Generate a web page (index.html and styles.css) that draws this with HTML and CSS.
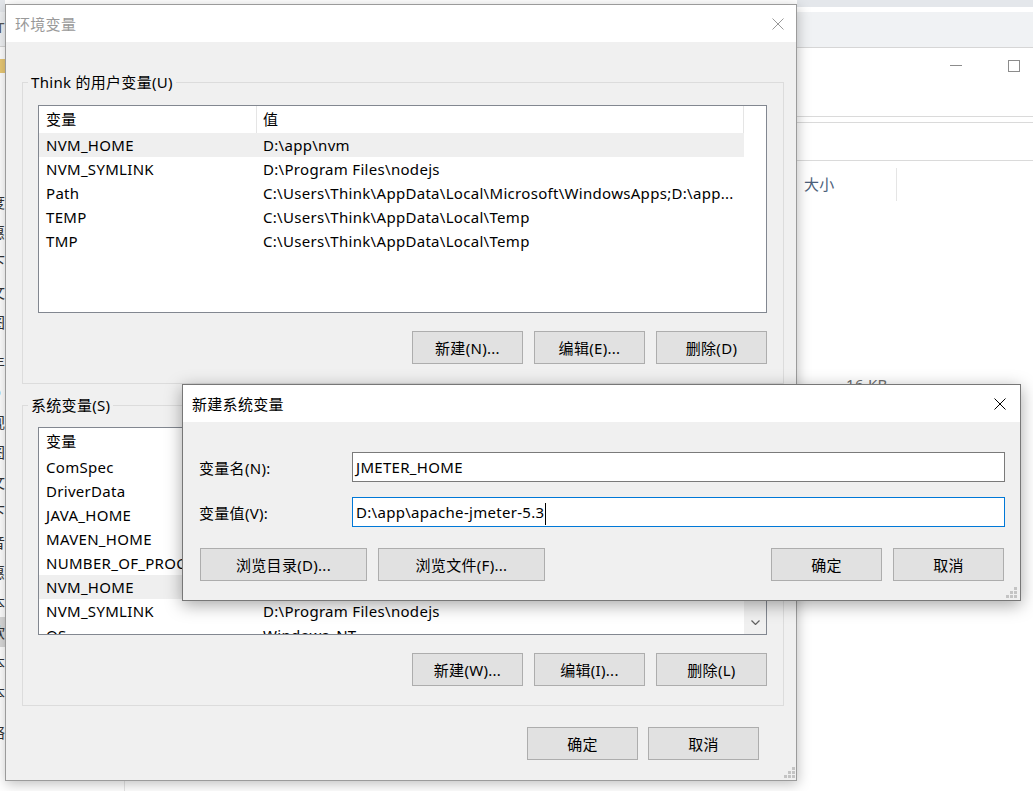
FILE: index.html
```html
<!DOCTYPE html>
<html lang="zh-CN">
<head>
    <meta charset="UTF-8">
    <title>环境变量</title>
    <link rel="stylesheet" href="styles.css">
</head>
<body>
<div class="desktop">
    <!-- explorer window behind the dialogs -->
    <div class="explorer-left">
        <div class="nav-top"></div>
        <div class="nav-title">T</div>
        <div class="nav-folder"></div>
        <ul class="nav-list">
            <li>度</li>
            <li>惠</li>
            <li>下</li>
            <li>文</li>
            <li>图</li>
            <li class="gap">丰</li>
            <li>D</li>
            <li>视</li>
            <li>图</li>
            <li>文</li>
            <li>下</li>
            <li>音</li>
            <li>惠</li>
            <li>本</li>
            <li class="current">软</li>
            <li>本</li>
            <li>本</li>
            <li class="gap">络</li>
        </ul>
    </div>

    <div class="explorer-right">
        <div class="tabs-band"></div>
        <div class="tabs-gap"></div>
        <div class="tabs-strip"></div>
        <div class="caption">
            <span class="cap-min"></span>
            <span class="cap-max"></span>
        </div>
        <div class="ribbon-line"></div>
        <div class="address-bar"></div>
        <div class="file-header">
            <span class="file-col">大小</span>
        </div>
        <div class="file-size">16 KB</div>
    </div>

    <div class="explorer-bottom"></div>

    <!-- 环境变量 -->
    <section class="dialog env-dialog">
        <header class="title-bar">
            <span class="title">环境变量</span>
            <svg class="close" viewBox="0 0 12 12"><path d="M0.5 0.5 L11.5 11.5 M11.5 0.5 L0.5 11.5"/></svg>
        </header>
        <div class="dialog-body">
            <fieldset class="group">
                <legend>Think 的用户变量(U)</legend>
                <div class="group-body">
                    <div class="list">
                        <div class="list-cols">
                            <div class="list-head"><span>变量</span><span>值</span></div>
                            <div class="row selected"><span>NVM_HOME</span><span>D:\app\nvm</span></div>
                            <div class="row"><span>NVM_SYMLINK</span><span>D:\Program Files\nodejs</span></div>
                            <div class="row"><span>Path</span><span>C:\Users\Think\AppData\Local\Microsoft\WindowsApps;D:\app...</span></div>
                            <div class="row"><span>TEMP</span><span>C:\Users\Think\AppData\Local\Temp</span></div>
                            <div class="row"><span>TMP</span><span>C:\Users\Think\AppData\Local\Temp</span></div>
                        </div>
                        <div class="gutter"></div>
                    </div>
                    <div class="btn-row">
                        <button>新建(N)...</button>
                        <button>编辑(E)...</button>
                        <button>删除(D)</button>
                    </div>
                </div>
            </fieldset>

            <fieldset class="group system">
                <legend>系统变量(S)</legend>
                <div class="group-body">
                    <div class="list">
                        <div class="list-cols">
                            <div class="list-head"><span>变量</span><span>值</span></div>
                            <div class="row"><span>ComSpec</span><span>C:\Windows\system32\cmd.exe</span></div>
                            <div class="row"><span>DriverData</span><span>C:\Windows\System32\Drivers\DriverData</span></div>
                            <div class="row"><span>JAVA_HOME</span><span>D:\app\jdk1.8.0_161</span></div>
                            <div class="row"><span>MAVEN_HOME</span><span>D:\app\apache-maven-3.6.3</span></div>
                            <div class="row"><span>NUMBER_OF_PROCESSORS</span><span>8</span></div>
                            <div class="row selected"><span>NVM_HOME</span><span>D:\app\nvm</span></div>
                            <div class="row"><span>NVM_SYMLINK</span><span>D:\Program Files\nodejs</span></div>
                            <div class="row"><span>OS</span><span>Windows_NT</span></div>
                        </div>
                        <div class="gutter scrollbar">
                            <svg class="arrow" viewBox="0 0 9 5"><path d="M0.5 0.5 L4.5 4.5 L8.5 0.5"/></svg>
                        </div>
                    </div>
                    <div class="btn-row">
                        <button>新建(W)...</button>
                        <button>编辑(I)...</button>
                        <button>删除(L)</button>
                    </div>
                </div>
            </fieldset>

            <div class="btn-row footer">
                <button>确定</button>
                <button>取消</button>
            </div>
        </div>
        <svg class="grip" viewBox="0 0 11 11"><path d="M8 0h3v3h-3z M4 4h3v3h-3z M8 4h3v3h-3z M0 8h3v3h-3z M4 8h3v3h-3z M8 8h3v3h-3z"/></svg>
    </section>

    <!-- 新建系统变量 -->
    <section class="dialog new-dialog">
        <header class="title-bar">
            <span class="title">新建系统变量</span>
            <svg class="close" viewBox="0 0 12 12"><path d="M0.5 0.5 L11.5 11.5 M11.5 0.5 L0.5 11.5"/></svg>
        </header>
        <div class="new-body">
            <div class="field">
                <label>变量名(N):</label>
                <div class="textbox">JMETER_HOME</div>
            </div>
            <div class="field">
                <label>变量值(V):</label>
                <div class="textbox focused">D:\app\apache-jmeter-5.3<span class="caret"></span></div>
            </div>
            <div class="btn-row browse-row">
                <div class="btn-group">
                    <button class="wide">浏览目录(D)...</button>
                    <button class="wide">浏览文件(F)...</button>
                </div>
                <div class="btn-group">
                    <button>确定</button>
                    <button>取消</button>
                </div>
            </div>
        </div>
        <svg class="grip" viewBox="0 0 11 11"><path d="M8 0h3v3h-3z M4 4h3v3h-3z M8 4h3v3h-3z M0 8h3v3h-3z M4 8h3v3h-3z M8 8h3v3h-3z"/></svg>
    </section>
</div>
</body>
</html>
```

FILE: styles.css
```css
* {
    margin: 0;
    padding: 0;
    box-sizing: border-box;
}

body {
    font-family: "Noto Sans", "Noto Sans CJK SC", sans-serif;
    font-size: 15px;
    letter-spacing: 0.3px;
    color: #000;
    background: #fff;
}

.desktop {
    position: relative;
    width: 1033px;
    height: 791px;
    overflow: hidden;
    background: #fff;
}

/* ---- explorer in the background ---- */

.explorer-left {
    position: absolute;
    left: 0;
    top: 0;
    width: 5px;
    height: 791px;
    overflow: hidden;
    background: #fff;
}

.nav-top {
    height: 12px;
    background: #e4e7eb;
}

.nav-title {
    height: 35px;
    margin-left: -4px;
    line-height: 30px;
    color: #555;
    border-bottom: 1px solid #d6d6d6;
    background: #f0f2f4;
}

.nav-folder {
    width: 5px;
    height: 14px;
    margin-top: 12px;
    background: #e8c874;
}

.nav-list {
    list-style: none;
    margin-top: 114px;
}

.nav-list li {
    height: 30px;
    line-height: 30px;
    margin-left: -10px;
    color: #333;
}

.nav-list li.gap {
    margin-top: 10px;
}

.nav-list li.current {
    background: #d9d9d9;
}

.explorer-right {
    position: absolute;
    left: 797px;
    top: 0;
    width: 236px;
    height: 791px;
    display: flex;
    flex-direction: column;
    background: #fff;
}

.tabs-band {
    height: 7px;
    background: #e4e7eb;
}

.tabs-gap {
    height: 5px;
}

.tabs-strip {
    height: 36px;
    background: #f0f2f4;
    border-bottom: 1px solid #d6d6d6;
}

.caption {
    height: 68px;
    display: flex;
    align-items: flex-start;
    padding-left: 153px;
}

.cap-min {
    width: 12px;
    height: 1px;
    margin-top: 17px;
    background: #8c8c8c;
}

.cap-max {
    width: 12px;
    height: 12px;
    margin-top: 12px;
    margin-left: 46px;
    border: 1px solid #8c8c8c;
}

.ribbon-line {
    height: 6px;
    border-top: 1px solid #dadada;
}

.address-bar {
    height: 39px;
    border-top: 1px solid #dadada;
    border-bottom: 1px solid #dadada;
}

.file-header {
    padding-top: 7px;
}

.file-col {
    display: block;
    width: 100px;
    height: 33px;
    line-height: 33px;
    padding-left: 7px;
    color: #4c607a;
    border-right: 1px solid #e5e5e5;
}

.file-size {
    margin-top: 173px;
    padding-left: 49px;
    line-height: 20px;
    color: #6d6d6d;
}

.explorer-bottom {
    position: absolute;
    left: 124px;
    top: 781px;
    width: 1px;
    height: 10px;
    background: #e5e5e5;
}

/* ---- dialogs ---- */

.dialog {
    position: absolute;
    display: flex;
    flex-direction: column;
    background: #f0f0f0;
}

.title-bar {
    height: 37px;
    flex-shrink: 0;
    display: flex;
    align-items: center;
    justify-content: space-between;
    padding: 0 12px 0 9px;
    background: #fff;
}

.close {
    width: 12px;
    height: 12px;
    fill: none;
    stroke: #000;
    stroke-width: 1;
}

.grip {
    position: absolute;
    width: 11px;
    height: 11px;
    fill: #c4c4c4;
}

button {
    width: 111px;
    height: 33px;
    font: inherit;
    letter-spacing: inherit;
    color: #000;
    background: #e1e1e1;
    border: 1px solid #adadad;
}

.env-dialog {
    left: 5px;
    top: 4px;
    width: 792px;
    height: 777px;
    border: 1px solid #9b9b9b;
    box-shadow: 1px 3px 12px rgba(0, 0, 0, 0.25);
}

.env-dialog .title {
    color: #999;
}

.env-dialog .close {
    stroke: #999;
}

.env-dialog .grip {
    right: 1px;
    bottom: 2px;
}

.dialog-body {
    flex: 1;
    padding: 30px 0 0 16px;
}

.group {
    width: 762px;
    min-width: 0;
    border: 1px solid #dcdcdc;
}

.group.system {
    margin-top: 11px;
}

.group legend {
    margin-left: 5px;
    padding: 0 3px;
    line-height: 20px;
}

.group-body {
    padding: 13px 16px 19px 15px;
}

.group.system .group-body {
    padding-top: 12px;
}

.list {
    display: flex;
    height: 208px;
    border: 1px solid #828790;
    background: #fff;
    overflow: hidden;
}

.list-cols {
    width: 705px;
}

.list-head,
.row {
    display: grid;
    grid-template-columns: 217px 488px;
}

.list-head span {
    height: 27px;
    line-height: 27px;
    padding-left: 7px;
}

.list-head span + span {
    padding-left: 6px;
    border-left: 1px solid #e5e5e5;
    border-right: 1px solid #e5e5e5;
}

.row span {
    height: 24px;
    line-height: 24px;
    padding-left: 7px;
    white-space: nowrap;
    overflow: hidden;
    text-overflow: ellipsis;
}

.row.selected {
    background: #efefef;
}

.gutter {
    width: 22px;
}

.scrollbar {
    display: flex;
    flex-direction: column;
    justify-content: flex-end;
    align-items: center;
    background: #f0f0f0;
}

.arrow {
    width: 9px;
    height: 5px;
    margin-bottom: 9px;
    fill: none;
    stroke: #606060;
    stroke-width: 1.2;
}

.btn-row {
    display: flex;
    justify-content: flex-end;
    gap: 11px;
    margin-top: 18px;
}

.btn-row.footer {
    gap: 10px;
    margin-top: 21px;
    padding-right: 37px;
}

/* ---- new system variable ---- */

.new-dialog {
    left: 182px;
    top: 384px;
    width: 839px;
    height: 217px;
    border: 1px solid #777;
    box-shadow: 0 4px 16px rgba(0, 0, 0, 0.35);
}

.new-dialog .title-bar {
    padding-right: 14px;
}

.new-dialog .grip {
    right: 3px;
    bottom: 2px;
}

.new-body {
    padding: 30px 15px 0 16px;
}

.field {
    display: grid;
    grid-template-columns: 153px 653px;
    align-items: center;
}

.field + .field {
    margin-top: 15px;
}

.textbox {
    height: 30px;
    line-height: 28px;
    padding: 0 3px;
    background: #fff;
    border: 1px solid #7a7a7a;
    white-space: nowrap;
}

.textbox.focused {
    border-color: #0078d7;
}

.caret {
    display: inline-block;
    width: 1px;
    height: 22px;
    margin-left: 1px;
    vertical-align: middle;
    background: #000;
}

.browse-row {
    justify-content: space-between;
    margin-top: 21px;
    padding: 0 1px;
}

.btn-group {
    display: flex;
    gap: 11px;
}

button.wide {
    width: 167px;
}
```
